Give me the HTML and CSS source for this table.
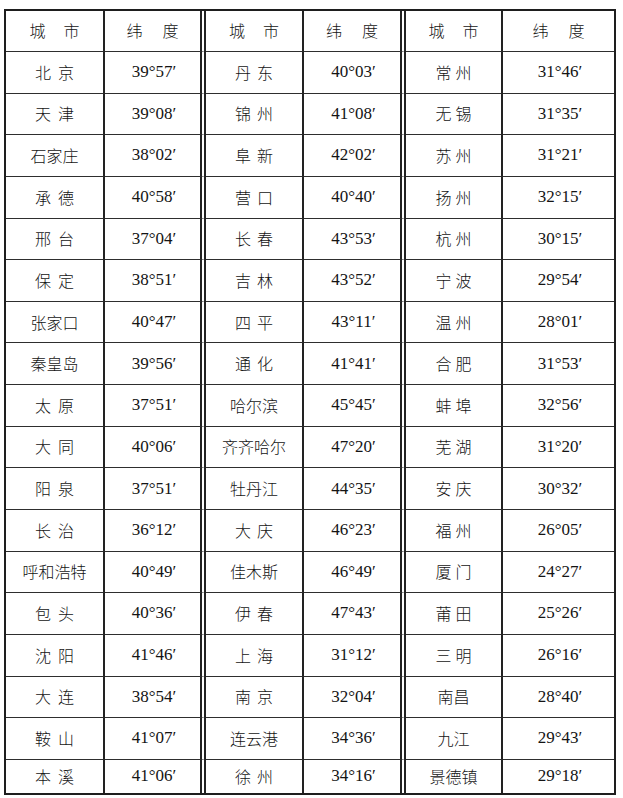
FILE: index.html
```html
<!DOCTYPE html>
<html lang="zh-CN">
<head>
<meta charset="utf-8">
<title>城市纬度表</title>
<link rel="stylesheet" href="styles.css">
</head>
<body>
<table class="lat-table">
<thead>
<tr>
<th class="w1"><span class="h1">城</span>市</th>
<th class="w2 col-end"><span class="h2">纬</span>度</th>
<th class="w3"><span class="h1">城</span>市</th>
<th class="w4 col-end"><span class="h2">纬</span>度</th>
<th class="w5"><span class="h1">城</span>市</th>
<th class="w6 last-col"><span class="h2">纬</span>度</th>
</tr>
</thead>
<tbody>
<tr><td class="name"><span class="s1">北</span>京</td><td class="deg col-end">39°57′</td><td class="name"><span class="s3">丹</span>东</td><td class="deg col-end">40°03′</td><td class="name"><span class="s5">常</span>州</td><td class="deg last-col">31°46′</td></tr>
<tr><td class="name"><span class="s1">天</span>津</td><td class="deg col-end">39°08′</td><td class="name"><span class="s3">锦</span>州</td><td class="deg col-end">41°08′</td><td class="name"><span class="s5">无</span>锡</td><td class="deg last-col">31°35′</td></tr>
<tr><td class="name">石家庄</td><td class="deg col-end">38°02′</td><td class="name"><span class="s3">阜</span>新</td><td class="deg col-end">42°02′</td><td class="name"><span class="s5">苏</span>州</td><td class="deg last-col">31°21′</td></tr>
<tr><td class="name"><span class="s1">承</span>德</td><td class="deg col-end">40°58′</td><td class="name"><span class="s3">营</span>口</td><td class="deg col-end">40°40′</td><td class="name"><span class="s5">扬</span>州</td><td class="deg last-col">32°15′</td></tr>
<tr><td class="name"><span class="s1">邢</span>台</td><td class="deg col-end">37°04′</td><td class="name"><span class="s3">长</span>春</td><td class="deg col-end">43°53′</td><td class="name"><span class="s5">杭</span>州</td><td class="deg last-col">30°15′</td></tr>
<tr><td class="name"><span class="s1">保</span>定</td><td class="deg col-end">38°51′</td><td class="name"><span class="s3">吉</span>林</td><td class="deg col-end">43°52′</td><td class="name"><span class="s5">宁</span>波</td><td class="deg last-col">29°54′</td></tr>
<tr><td class="name">张家口</td><td class="deg col-end">40°47′</td><td class="name"><span class="s3">四</span>平</td><td class="deg col-end">43°11′</td><td class="name"><span class="s5">温</span>州</td><td class="deg last-col">28°01′</td></tr>
<tr><td class="name">秦皇岛</td><td class="deg col-end">39°56′</td><td class="name"><span class="s3">通</span>化</td><td class="deg col-end">41°41′</td><td class="name"><span class="s5">合</span>肥</td><td class="deg last-col">31°53′</td></tr>
<tr><td class="name"><span class="s1">太</span>原</td><td class="deg col-end">37°51′</td><td class="name">哈尔滨</td><td class="deg col-end">45°45′</td><td class="name"><span class="s5">蚌</span>埠</td><td class="deg last-col">32°56′</td></tr>
<tr><td class="name"><span class="s1">大</span>同</td><td class="deg col-end">40°06′</td><td class="name">齐齐哈尔</td><td class="deg col-end">47°20′</td><td class="name"><span class="s5">芜</span>湖</td><td class="deg last-col">31°20′</td></tr>
<tr><td class="name"><span class="s1">阳</span>泉</td><td class="deg col-end">37°51′</td><td class="name">牡丹江</td><td class="deg col-end">44°35′</td><td class="name"><span class="s5">安</span>庆</td><td class="deg last-col">30°32′</td></tr>
<tr><td class="name"><span class="s1">长</span>治</td><td class="deg col-end">36°12′</td><td class="name"><span class="s3">大</span>庆</td><td class="deg col-end">46°23′</td><td class="name"><span class="s5">福</span>州</td><td class="deg last-col">26°05′</td></tr>
<tr><td class="name">呼和浩特</td><td class="deg col-end">40°49′</td><td class="name">佳木斯</td><td class="deg col-end">46°49′</td><td class="name"><span class="s5">厦</span>门</td><td class="deg last-col">24°27′</td></tr>
<tr><td class="name"><span class="s1">包</span>头</td><td class="deg col-end">40°36′</td><td class="name"><span class="s3">伊</span>春</td><td class="deg col-end">47°43′</td><td class="name"><span class="s5">莆</span>田</td><td class="deg last-col">25°26′</td></tr>
<tr><td class="name"><span class="s1">沈</span>阳</td><td class="deg col-end">41°46′</td><td class="name"><span class="s3">上</span>海</td><td class="deg col-end">31°12′</td><td class="name"><span class="s5">三</span>明</td><td class="deg last-col">26°16′</td></tr>
<tr><td class="name"><span class="s1">大</span>连</td><td class="deg col-end">38°54′</td><td class="name"><span class="s3">南</span>京</td><td class="deg col-end">32°04′</td><td class="name">南昌</td><td class="deg last-col">28°40′</td></tr>
<tr><td class="name"><span class="s1">鞍</span>山</td><td class="deg col-end">41°07′</td><td class="name">连云港</td><td class="deg col-end">34°36′</td><td class="name">九江</td><td class="deg last-col">29°43′</td></tr>
<tr class="last"><td class="name"><span class="s1">本</span>溪</td><td class="deg col-end">41°06′</td><td class="name"><span class="s3">徐</span>州</td><td class="deg col-end">34°16′</td><td class="name">景德镇</td><td class="deg last-col">29°18′</td></tr>
</tbody>
</table>
</body>
</html>
```
FILE: styles.css
```css
html, body {
  margin: 0;
  padding: 0;
  background: #ffffff;
}

.lat-table {
  margin: 9px 0 0 4px;
  width: 612px;
  table-layout: fixed;
  border-collapse: separate;
  border-spacing: 0;
  border: 2px solid #1e1e1e;
  font-family: "Noto Sans CJK SC", sans-serif;
  color: #141414;
}

.lat-table th,
.lat-table td {
  box-sizing: border-box;
  padding: 0;
  height: 41.65px;
  text-align: center;
  vertical-align: middle;
  font-weight: 300;
  line-height: 1.2;
  white-space: nowrap;
  border-right: 2px solid #222222;
  border-bottom: 1px solid #2e2e2e;
}

.lat-table thead th {
  height: 41px;
  font-size: 16px;
}

.lat-table .col-end {
  border-right: 6px double #222222;
}

.lat-table .last-col {
  border-right: none;
}

.lat-table tr.last td {
  border-bottom: none;
  height: 33px;
}

.w1 { width: 99px; }
.w2 { width: 101px; }
.w3 { width: 98px; }
.w4 { width: 102px; }
.w5 { width: 97px; }
.w6 { width: 111px; }

.name {
  font-size: 16px;
}

.lat-table .deg {
  font-family: "Liberation Serif", "Times New Roman", "DejaVu Serif", serif;
  font-weight: normal;
  font-size: 17px;
  padding-left: 3px;
}

.h1 { letter-spacing: 18px; }
.h2 { letter-spacing: 20px; }
.s1 { letter-spacing: 7px; }
.s3 { letter-spacing: 6px; }
.s5 { letter-spacing: 4px; }
```
